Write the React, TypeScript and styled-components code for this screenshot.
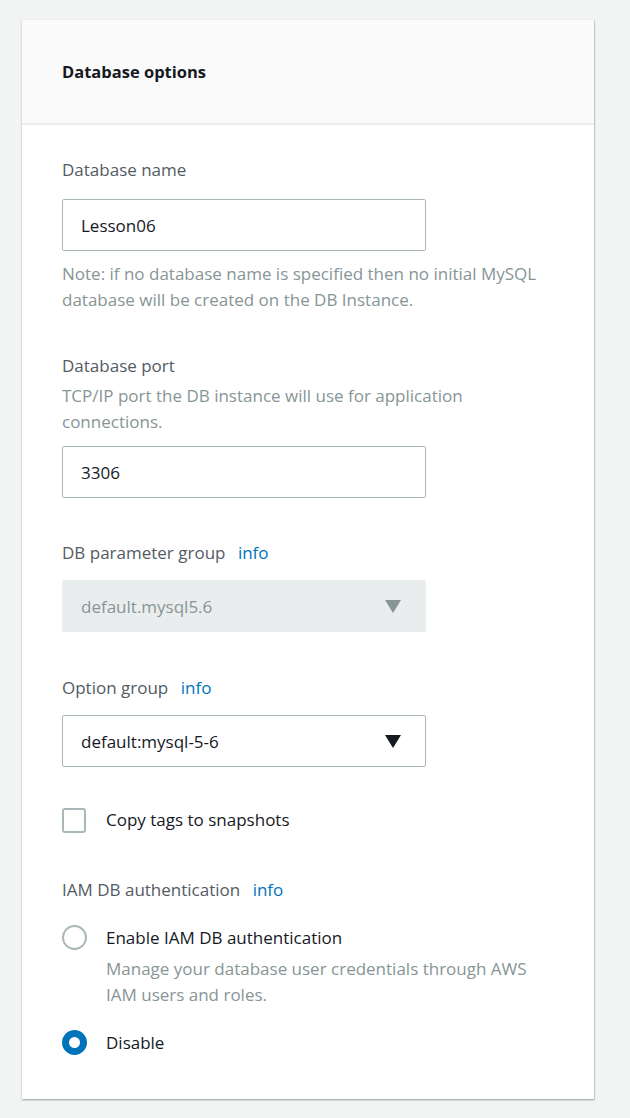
import styled, { createGlobalStyle } from "styled-components";

const Global = createGlobalStyle`
  html, body {
    margin: 0;
    padding: 0;
    background: #f2f3f3;
  }
  body {
    font-family: "Open Sans", "Noto Sans", sans-serif;
    -webkit-font-smoothing: antialiased;
  }
`;

export default function App() {
  return (
    <>
      <Global />
      <Page>
        <Card>
          <Header>
            <Title>Database options</Title>
          </Header>
          <Body>
            <Field>
              <Label>Database name</Label>
              <Input defaultValue="Lesson06" />
              <Hint>
                Note: if no database name is specified then no initial MySQL
                database will be created on the DB Instance.
              </Hint>
            </Field>

            <Field>
              <Label>Database port</Label>
              <Desc>
                TCP/IP port the DB instance will use for application
                connections.
              </Desc>
              <Input defaultValue="3306" />
            </Field>

            <Field $extra={2}>
              <Label>
                DB parameter group <Info>info</Info>
              </Label>
              <Select disabled>
                <span>default.mysql5.6</span>
                <Arrow disabled />
              </Select>
            </Field>

            <Field $extra={3}>
              <Label>
                Option group <Info>info</Info>
              </Label>
              <Select>
                <span>default:mysql-5-6</span>
                <Arrow />
              </Select>
            </Field>

            <CheckRow>
              <CheckBox />
              <OptionText>Copy tags to snapshots</OptionText>
            </CheckRow>

            <Field>
              <Label>
                IAM DB authentication <Info>info</Info>
              </Label>
              <RadioGroup>
                <RadioRow>
                  <Radio />
                  <div>
                    <OptionText>Enable IAM DB authentication</OptionText>
                    <RadioDesc>
                      Manage your database user credentials through AWS IAM
                      users and roles.
                    </RadioDesc>
                  </div>
                </RadioRow>
                <RadioRow>
                  <Radio checked />
                  <OptionText>Disable</OptionText>
                </RadioRow>
              </RadioGroup>
            </Field>
          </Body>
        </Card>
      </Page>
    </>
  );
}

const Page = styled.div`
  padding: 20px 36px 20px 22px;
`;

const Card = styled.div`
  background: #ffffff;
  box-shadow: 0 1px 2px rgba(0, 28, 36, 0.3), 1px 1px 1px rgba(0, 28, 36, 0.1);
`;

const Header = styled.div`
  background: #fafafa;
  border-bottom: 2px solid #eaeded;
  height: 103px;
  display: flex;
  align-items: center;
  padding: 0 40px;
`;

const Title = styled.h2`
  margin: 0;
  font-size: 16.5px;
  font-weight: 700;
  color: #16191f;
`;

const Body = styled.div`
  padding: 32px 40px 43px;
  display: flex;
  flex-direction: column;
  gap: 40px;
`;

const Field = styled.div<{ $extra?: number }>`
  display: flex;
  flex-direction: column;
  margin-top: ${(p) => p.$extra ?? 0}px;
`;

const Label = styled.div`
  font-size: 17px;
  line-height: 26px;
  color: #545b64;
  margin-bottom: 16px;
`;

const Info = styled.span`
  color: #0073bb;
  margin-left: 8px;
`;

const Desc = styled.div`
  font-size: 17px;
  line-height: 26px;
  color: #879596;
  margin-top: -12px;
  margin-bottom: 11px;
`;

const Hint = styled.div`
  font-size: 17px;
  line-height: 26px;
  color: #879596;
  margin-top: 10px;
`;

const Input = styled.input`
  box-sizing: border-box;
  width: 364px;
  height: 52px;
  border: 1px solid #aab7b8;
  border-radius: 2px;
  padding: 0 18px;
  font-family: inherit;
  font-size: 17px;
  color: #16191f;
  outline: none;
`;

const Select = styled.div<{ disabled?: boolean }>`
  box-sizing: border-box;
  width: 364px;
  height: 52px;
  margin-top: -2px;
  border: 1px solid ${(p) => (p.disabled ? "#eaeded" : "#aab7b8")};
  background: ${(p) => (p.disabled ? "#eaeded" : "#ffffff")};
  color: ${(p) => (p.disabled ? "#879596" : "#16191f")};
  border-radius: 2px;
  padding: 0 24px 0 18px;
  display: flex;
  align-items: center;
  justify-content: space-between;
  font-size: 17px;
`;

const Arrow = styled.span<{ disabled?: boolean }>`
  width: 0;
  height: 0;
  border-left: 8px solid transparent;
  border-right: 8px solid transparent;
  border-top: 13px solid ${(p) => (p.disabled ? "#879596" : "#16191f")};
`;

const CheckRow = styled.div`
  display: flex;
  align-items: center;
  gap: 20px;
  margin-bottom: 4px;
`;

const CheckBox = styled.span`
  box-sizing: border-box;
  width: 24px;
  height: 25px;
  border: 2px solid #aab7b8;
  border-radius: 3px;
  flex-shrink: 0;
`;

const OptionText = styled.div`
  font-size: 17px;
  line-height: 26px;
  color: #16191f;
`;

const RadioGroup = styled.div`
  display: flex;
  flex-direction: column;
  gap: 22px;
  margin-top: 6px;
`;

const RadioRow = styled.div`
  display: flex;
  align-items: flex-start;
  gap: 19px;
`;

const Radio = styled.span<{ checked?: boolean }>`
  box-sizing: border-box;
  width: 25px;
  height: 25px;
  border-radius: 50%;
  flex-shrink: 0;
  border: ${(p) => (p.checked ? "7px solid #0073bb" : "2px solid #aab7b8")};
  background: #ffffff;
`;

const RadioDesc = styled.div`
  font-size: 17px;
  line-height: 26px;
  color: #879596;
  margin-top: 5px;
`;
